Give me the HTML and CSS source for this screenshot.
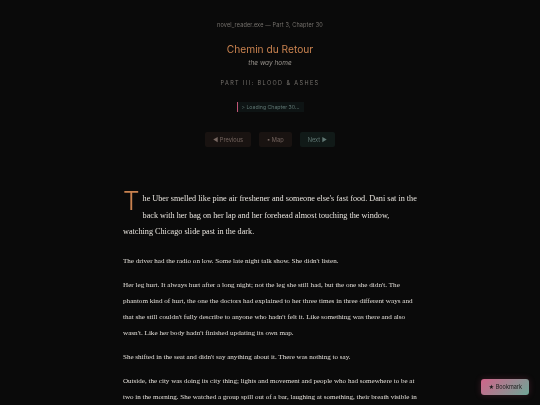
FILE: index.html
```html
<!DOCTYPE html>
<html>
<head>
    <meta charset="utf-8" />
    <title>Chemin du Retour</title>
    <link rel="stylesheet" href="styles.css">
</head>
<body class="body">
    <header class="header">
        <div class="crumb">novel_reader.exe — Part 3, Chapter 30</div>
        <h1 class="title">Chemin du Retour</h1>
        <div class="subtitle">the way home</div>
        <div class="part">PART III: BLOOD &amp; ASHES</div>
        <div class="status"><span class="statusText">&gt; Loading Chapter 30...</span></div>
        <nav class="nav">
            <a class="btn">◄ Previous</a>
            <a class="btn">▪ Map</a>
            <a class="btn btnNext">Next ►</a>
        </nav>
    </header>
    <main class="chapter">
        <p class="lead"><span class="dropcap">T</span>he Uber smelled like pine air freshener and someone else's fast food. Dani sat in the<br>back with her bag on her lap and her forehead almost touching the window,<br>watching Chicago slide past in the dark.</p>
        <p>The driver had the radio on low. Some late night talk show. She didn't listen.</p>
        <p class="wide">Her leg hurt. It always hurt after a long night; not the leg she still had, but the one she didn't. The<br>phantom kind of hurt, the one the doctors had explained to her three times in three different ways and<br>that she still couldn't fully describe to anyone who hadn't felt it. Like something was there and also<br>wasn't. Like her body hadn't finished updating its own map.</p>
        <p>She shifted in the seat and didn't say anything about it. There was nothing to say.</p>
        <p>Outside, the city was doing its city thing; lights and movement and people who had somewhere to be at<br>two in the morning. She watched a group spill out of a bar, laughing at something, their breath visible in</p>
    </main>
    <button class="bookmark">★ Bookmark</button>
</body>
</html>
```

FILE: styles.css
```css
.body {
    margin: 0;
    height: 405px;
    overflow: hidden;
    background-color: #0a0a0a;
    color: #e8e4df;
    font-family: "Liberation Serif", serif;
}
.header {
    display: flex;
    flex-direction: column;
    align-items: center;
    padding-top: 21px;
    font-family: "Inter", sans-serif;
    will-change: opacity;
}
.crumb {
    font-size: 5.5px;
    line-height: 8px;
    letter-spacing: 0.15px;
    color: #77736e;
}
.title {
    margin: 13px 0 0;
    font-size: 10.2px;
    line-height: 14px;
    font-weight: 400;
    color: #c9824f;
}
.subtitle {
    margin-top: 3px;
    font-size: 6.5px;
    line-height: 9px;
    font-style: italic;
    color: #97928c;
}
.part {
    margin-top: 11px;
    font-size: 5.5px;
    line-height: 8px;
    letter-spacing: 1.4px;
    color: #77736e;
}
.status {
    margin-top: 15px;
    width: 62px;
    height: 10px;
    padding-left: 4px;
    border-left: 1.5px solid #c05575;
    background-color: #0e1414;
}
.statusText {
    display: block;
    font-size: 5.2px;
    line-height: 10px;
    color: #5f7672;
    white-space: nowrap;
}
.nav {
    display: flex;
    gap: 8px;
    margin-top: 20px;
}
.btn {
    padding: 0 8px;
    font-size: 5.7px;
    line-height: 15px;
    border-radius: 2px;
    color: #766660;
    background-color: #191311;
}
.btnNext {
    color: #5f7672;
    background-color: #111a18;
}
.chapter {
    width: 297px;
    margin: 44px 0 0 123px;
    font-size: 7.05px;
    line-height: 16px;
    color: #e0dcd6;
    white-space: nowrap;
    will-change: opacity;
}
.chapter p {
    margin: 0 0 8px;
}
.chapter .lead {
    font-size: 8.2px;
    line-height: 16.5px;
    margin-bottom: 12px;
    color: #e6e2dc;
}
.chapter .wide {
    font-size: 7.15px;
}
.dropcap {
    float: left;
    margin: -4px 3px 0 0;
    font-size: 26px;
    line-height: 28px;
    font-family: "Inter", sans-serif;
    font-weight: 300;
    color: #c9824f;
}
.bookmark {
    position: fixed;
    right: 11px;
    bottom: 10px;
    padding: 0 7px;
    height: 16px;
    border: 0;
    border-radius: 3px;
    font-family: "Inter", sans-serif;
    font-size: 5.5px;
    color: #1a1a1a;
    background: linear-gradient(135deg, #d0648a, #6fa596);
    box-shadow: 0 0 6px rgba(200, 80, 120, 0.25);
}
```
